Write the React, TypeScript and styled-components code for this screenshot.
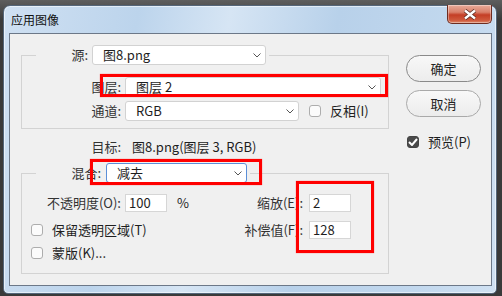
import React from "react";
import styled, { createGlobalStyle } from "styled-components";

const GlobalStyle = createGlobalStyle`
  html, body {
    margin: 0;
    padding: 0;
  }
  body {
    width: 502px;
    height: 296px;
    overflow: hidden;
    background: linear-gradient(#5e5e5e, #3a3a3a 20px, #3a3a3a);
    font-family: "Noto Sans CJK SC", "Noto Sans", sans-serif;
  }
`;

const Desktop = styled.div`
  padding: 5px 5px 2px 3px;
`;

const Window = styled.div`
  width: 494px;
  height: 289px;
  box-sizing: border-box;
  border: 1px solid #54667a;
  border-radius: 7px 7px 5px 5px;
  padding: 0 4px 7px 5px;
  display: flex;
  flex-direction: column;
  background: linear-gradient(
    100deg,
    #cfe0f2 0%,
    #bcd4ec 25%,
    #d6e5f4 42%,
    #b8d1ea 62%,
    #c2d8ee 85%,
    #d0e1f2 100%
  );
  box-shadow: inset 0 0 0 1px rgba(255, 255, 255, 0.55);
`;

const TitleBar = styled.div`
  height: 27px;
  display: flex;
  align-items: center;
  justify-content: space-between;
`;

const Title = styled.span`
  padding-left: 2px;
  font-size: 12px;
  line-height: 16px;
  color: #111;
`;

const CloseButton = styled.div`
  align-self: flex-start;
  margin-top: -1px;
  width: 45px;
  height: 19px;
  box-sizing: border-box;
  border: 1px solid #6d2c20;
  border-top: none;
  border-radius: 0 0 5px 5px;
  display: flex;
  align-items: center;
  justify-content: center;
  background: linear-gradient(#e9ab9a, #d9806a 40%, #c43e25 55%, #cf5a3d 85%, #de8a6c);
  box-shadow: inset 0 0 0 1px rgba(255, 255, 255, 0.35);
`;

const Client = styled.div`
  position: relative;
  flex: 1;
  display: flex;
  border: 1px solid #6c7888;
  background: #f0f0f0;
  color: #1e1e1e;
  font-size: 13px;
  line-height: 18px;
`;

const LeftPane = styled.div`
  width: 368px;
  padding-left: 11px;
`;

const RightPane = styled.div`
  margin-left: 17px;
  padding-top: 21px;
  display: flex;
  flex-direction: column;
`;

const Group = styled.fieldset<{ $top: number; $bottom: number }>`
  margin: ${(p) => p.$top}px 0 0;
  padding: 0 0 ${(p) => p.$bottom}px 0;
  border: 1px solid #d3d3d3;
  min-width: 0;
`;

const Legend = styled.legend`
  margin: 4px 0 0 14px;
  padding: 0 3px 0 0;
  display: flex;
  align-items: center;
`;

const Row = styled.div<{ $mt: number; $h?: number }>`
  display: flex;
  align-items: center;
  margin-top: ${(p) => p.$mt}px;
  height: ${(p) => p.$h ?? 20}px;
`;

const Half = styled.div<{ $w?: number }>`
  display: flex;
  align-items: center;
  width: ${(p) => (p.$w ? `${p.$w}px` : "auto")};
`;

const Label = styled.span<{ $w: number }>`
  width: ${(p) => p.$w}px;
  text-align: right;
  white-space: nowrap;
  color: #333;
`;

const Value = styled.span<{ $ml?: number }>`
  margin-left: ${(p) => p.$ml ?? 0}px;
  white-space: nowrap;
`;

const SelectBox = styled.div<{ $w: number; $ml: number; $focus?: boolean }>`
  width: ${(p) => p.$w}px;
  height: 20px;
  margin-left: ${(p) => p.$ml}px;
  box-sizing: border-box;
  display: flex;
  align-items: center;
  justify-content: space-between;
  padding: 0 4px 0 10px;
  background: #fff;
  border: 1px solid ${(p) => (p.$focus ? "#5b8fd8" : "#d2d2d2")};
  border-radius: 3px;
  white-space: nowrap;
`;

const NumInput = styled.div<{ $ml: number }>`
  width: 42px;
  height: 18px;
  margin-left: ${(p) => p.$ml}px;
  box-sizing: border-box;
  padding-left: 3px;
  background: #fff;
  border: 1px solid #d6d6d6;
  line-height: 16px;
`;

const Check = styled.div<{ $ml: number; $on?: boolean }>`
  width: 12px;
  height: 12px;
  margin-left: ${(p) => p.$ml}px;
  box-sizing: border-box;
  border: 1px solid ${(p) => (p.$on ? "#444" : "#adadad")};
  border-radius: 3px;
  background: ${(p) => (p.$on ? "#4a4a4a" : "#fbfbfb")};
  display: flex;
  align-items: center;
  justify-content: center;
  flex: none;
`;

const Button = styled.div<{ $def?: boolean; $mt?: number }>`
  width: 75px;
  height: 27px;
  margin-top: ${(p) => p.$mt ?? 0}px;
  box-sizing: border-box;
  border: 1px solid ${(p) => (p.$def ? "#8a8a8a" : "#a9a9a9")};
  border-radius: 14px;
  background: linear-gradient(#f8f8f8, #ececec);
  display: flex;
  align-items: center;
  justify-content: center;
  color: #222;
`;

const PreviewRow = styled.div`
  display: flex;
  align-items: center;
  margin-top: 19px;
  height: 12px;
`;

const RedMark = styled.div<{ $x: number; $y: number; $w: number; $h: number }>`
  position: absolute;
  left: ${(p) => p.$x}px;
  top: ${(p) => p.$y}px;
  width: ${(p) => p.$w}px;
  height: ${(p) => p.$h}px;
  box-sizing: border-box;
  border: 3px solid #ff0000;
  box-shadow: 0 0 1px rgba(255, 0, 0, 0.6);
  pointer-events: none;
`;

const Chevron = () => (
  <svg width="8" height="5" viewBox="0 0 8 5">
    <path d="M0.5 0.5 L4 4 L7.5 0.5" fill="none" stroke="#555" strokeWidth="1" />
  </svg>
);

const Tick = () => (
  <svg width="10" height="8" viewBox="0 0 10 8">
    <path d="M1 4 L4 7 L9 1" fill="none" stroke="#fff" strokeWidth="2" />
  </svg>
);

const Select = ({
  text,
  w,
  ml,
  focus,
}: {
  text: string;
  w: number;
  ml: number;
  focus?: boolean;
}) => (
  <SelectBox $w={w} $ml={ml} $focus={focus}>
    <span>{text}</span>
    <Chevron />
  </SelectBox>
);

const App = () => {
  return (
    <>
      <GlobalStyle />
      <Desktop>
        <Window>
          <TitleBar>
            <Title>应用图像</Title>
            <CloseButton>
              <svg width="14" height="11" viewBox="0 0 14 11">
                <path d="M2 1.5 L12 9.5 M12 1.5 L2 9.5" stroke="#5a2a20" strokeWidth="4" />
                <path d="M2 1.5 L12 9.5 M12 1.5 L2 9.5" stroke="#fff" strokeWidth="2.4" />
              </svg>
            </CloseButton>
          </TitleBar>
          <Client>
            <LeftPane>
              <Group $top={11} $bottom={7}>
                <Legend>
                  <Label $w={52}>源:</Label>
                  <Select text="图8.png" w={174} ml={4} />
                </Legend>
                <Row $mt={12}>
                  <Label $w={99}>图层:</Label>
                  <Select text="图层 2" w={256} ml={4} />
                </Row>
                <Row $mt={4}>
                  <Label $w={99}>通道:</Label>
                  <Select text="RGB" w={174} ml={4} />
                  <Check $ml={10} />
                  <Value $ml={9}>反相(I)</Value>
                </Row>
              </Group>
              <Row $mt={9} $h={18}>
                <Label $w={100}>目标:</Label>
                <Value $ml={11}>图8.png(图层 3, RGB)</Value>
              </Row>
              <Group $top={7} $bottom={11}>
                <Legend>
                  <Label $w={65}>混合:</Label>
                  <Select text="减去" w={141} ml={5} focus />
                </Legend>
                <Row $mt={11} $h={18}>
                  <Half $w={218}>
                    <Label $w={99}>不透明度(O):</Label>
                    <NumInput $ml={4}>100</NumInput>
                    <Value $ml={10}>%</Value>
                  </Half>
                  <Half>
                    <Label $w={63}>缩放(E):</Label>
                    <NumInput $ml={6}>2</NumInput>
                  </Half>
                </Row>
                <Row $mt={9} $h={18}>
                  <Half $w={218}>
                    <Check $ml={9} />
                    <Value $ml={9}>保留透明区域(T)</Value>
                  </Half>
                  <Half>
                    <Label $w={63}>补偿值(F):</Label>
                    <NumInput $ml={6}>128</NumInput>
                  </Half>
                </Row>
                <Row $mt={5} $h={18}>
                  <Check $ml={9} />
                  <Value $ml={9}>蒙版(K)...</Value>
                </Row>
              </Group>
            </LeftPane>
            <RightPane>
              <Button $def>确定</Button>
              <Button $mt={8}>取消</Button>
              <PreviewRow>
                <Check $ml={1} $on>
                  <Tick />
                </Check>
                <Value $ml={9}>预览(P)</Value>
              </PreviewRow>
            </RightPane>
            <RedMark $x={90} $y={40} $w={288} $h={23} />
            <RedMark $x={80} $y={125} $w={172} $h={26} />
            <RedMark $x={286} $y={147} $w={78} $h={72} />
          </Client>
        </Window>
      </Desktop>
    </>
  );
};

export default App;
